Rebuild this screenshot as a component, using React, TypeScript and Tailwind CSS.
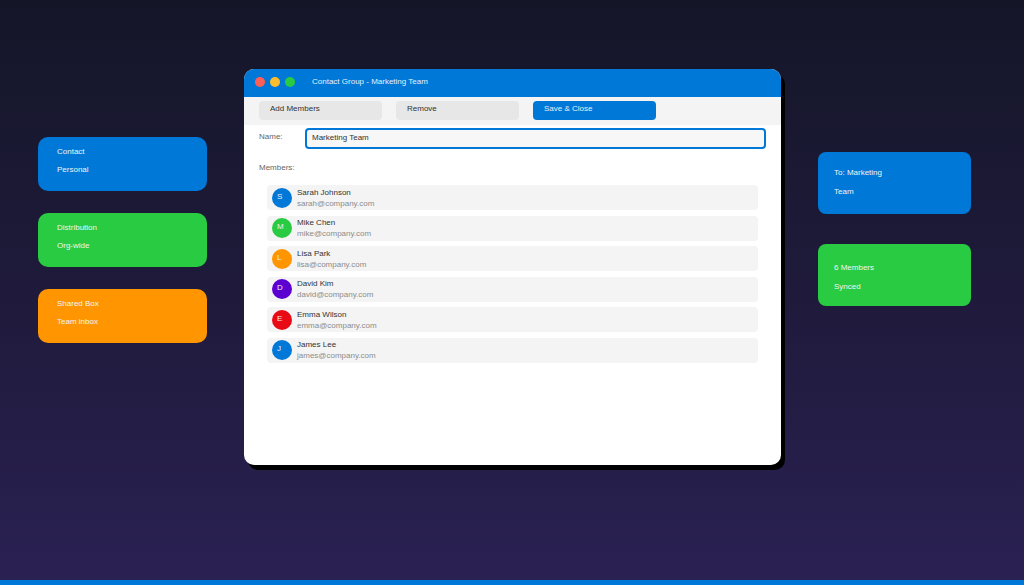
import { useState } from "react";
import clsx from "clsx";

const groupTypes = [
  { title: "Contact", detail: "Personal", color: "bg-[#0078d7]" },
  { title: "Distribution", detail: "Org-wide", color: "bg-[#28cb42]" },
  { title: "Shared Box", detail: "Team inbox", color: "bg-[#ff9500]" },
];

const members = [
  { name: "Sarah Johnson", email: "sarah@company.com", color: "bg-[#0078d7]" },
  { name: "Mike Chen", email: "mike@company.com", color: "bg-[#28cb42]" },
  { name: "Lisa Park", email: "lisa@company.com", color: "bg-[#ff9500]" },
  { name: "David Kim", email: "david@company.com", color: "bg-[#5c00d2]" },
  { name: "Emma Wilson", email: "emma@company.com", color: "bg-[#e80b16]" },
  { name: "James Lee", email: "james@company.com", color: "bg-[#0078d7]" },
];

const ToolbarButton = ({ label, primary = false }: { label: string; primary?: boolean }) => (
  <button
    type="button"
    className={clsx(
      "h-[19px] w-[123px] rounded-[4px] px-[11px] pb-1 text-left",
      primary ? "bg-[#0078d7] text-[#e4f0fa]" : "bg-[#e7e7e7] text-[#333333]"
    )}
  >
    {label}
  </button>
);

const GroupWindow = () => {
  const [name, setName] = useState("Marketing Team");

  return (
    <main className="mt-[69px] min-h-[396px] min-w-0 flex-1 self-start overflow-hidden rounded-[10px] bg-white shadow-[4px_5px_0_#000000]">
      <header className="flex h-[28px] items-center gap-[17px] bg-[#0078d7] px-[11px] pb-[2px]">
        <div className="flex gap-[5px]">
          <span className="size-[10px] rounded-full bg-[#ff5f57]" />
          <span className="size-[10px] rounded-full bg-[#ffbd2e]" />
          <span className="size-[10px] rounded-full bg-[#28cb42]" />
        </div>
        <h1 className="text-[#e4f0fa]">Contact Group - Marketing Team</h1>
      </header>

      <div className="flex h-[28px] items-start gap-[14px] bg-[#f4f4f4] px-[15px] pt-1">
        <ToolbarButton label="Add Members" />
        <ToolbarButton label="Remove" />
        <ToolbarButton label="Save & Close" primary />
      </div>

      <div className="flex px-[15px] pt-[3px]">
        <label htmlFor="group-name" className="w-[46px] pt-1 text-[#666666]">
          Name:
        </label>
        <input
          id="group-name"
          value={name}
          onChange={(e) => setName(e.target.value)}
          className="h-[21px] min-w-0 flex-1 rounded-[4px] border-2 border-[#0078d7] bg-[#f7f7f7] px-[5px] pb-[3px] text-[#333333] outline-none"
        />
      </div>

      <h2 className="px-[15px] pt-[14px] text-[#666666]">Members:</h2>
      <ul className="mx-[23px] mt-3 flex h-[178px] flex-col justify-between">
        {members.map((member) => (
          <li
            key={member.email}
            className="flex h-[25px] items-center gap-[5px] rounded-[4px] bg-[#f4f4f4] px-[5px]"
          >
            <span
              className={clsx(
                "size-[20px] rounded-full pl-[5px] pt-[4px] text-[#f0f0f0]",
                member.color
              )}
            >
              {member.name[0]}
            </span>
            <div className="leading-[11px]">
              <p className="text-[#333333]">{member.name}</p>
              <p className="text-[#8c8c8c]">{member.email}</p>
            </div>
          </li>
        ))}
      </ul>
    </main>
  );
};

const App = () => {
  return (
    <div className="flex min-h-screen flex-col bg-linear-to-b from-[#141628] via-[#1f1a3b] to-[#2a2153] font-['Liberation_Sans',sans-serif] text-[8px] leading-[10px]">
      <div className="flex flex-1 gap-[37px] pl-[38px] pr-[53px]">
        <aside className="flex w-[169px] shrink-0 flex-col gap-[22px] pt-[137px]">
          {groupTypes.map((type) => (
            <section
              key={type.title}
              className={clsx(
                "flex h-[54px] flex-col gap-2 rounded-[10px] px-[19px] pt-[10px] text-[#eef5f5]",
                type.color
              )}
            >
              <h2>{type.title}</h2>
              <p>{type.detail}</p>
            </section>
          ))}
        </aside>

        <GroupWindow />

        <aside className="flex w-[153px] shrink-0 flex-col gap-[30px] pt-[152px]">
          <section className="flex h-[62px] flex-col gap-[9px] rounded-[8px] bg-[#0078d7] px-4 pt-[16px] text-[#eef5f5]">
            <p>To: Marketing</p>
            <p>Team</p>
          </section>
          <section className="flex h-[62px] flex-col gap-[9px] rounded-[8px] bg-[#28cb42] px-4 pt-[19px] text-[#eef5f5]">
            <p>6 Members</p>
            <p>Synced</p>
          </section>
        </aside>
      </div>
      <footer className="h-[5px] bg-[#0078d7]" />
    </div>
  );
};

export default App;
